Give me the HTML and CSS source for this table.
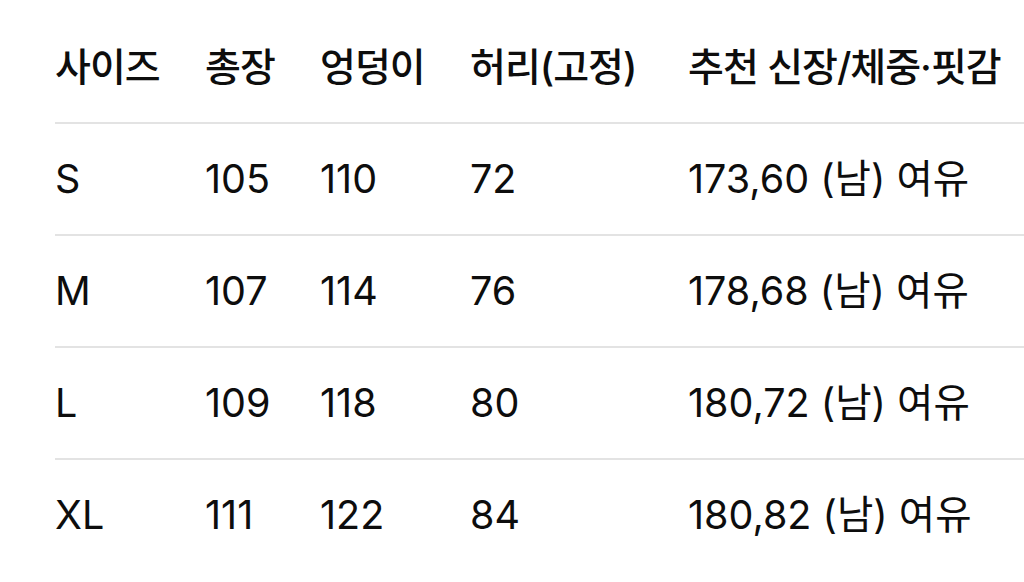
FILE: index.html
```html
<!DOCTYPE html>
<html lang="ko">
<head>
<meta charset="utf-8">
<link rel="stylesheet" href="styles.css">
</head>
<body>
<div class="table">
  <div class="row head">
    <div>사이즈</div><div>총장</div><div>엉덩이</div><div>허리(고정)</div><div>추천 신장/체중·핏감</div>
  </div>
  <div class="row">
    <div>S</div><div>105</div><div>110</div><div>72</div><div>173,60 (남) 여유</div>
  </div>
  <div class="row">
    <div>M</div><div>107</div><div>114</div><div>76</div><div>178,68 (남) 여유</div>
  </div>
  <div class="row">
    <div>L</div><div>109</div><div>118</div><div>80</div><div>180,72 (남) 여유</div>
  </div>
  <div class="row">
    <div>XL</div><div>111</div><div>122</div><div>84</div><div>180,82 (남) 여유</div>
  </div>
</div>
</body>
</html>
```
FILE: styles.css
```css
html, body {
  margin: 0;
  padding: 0;
  background: #ffffff;
}
body {
  font-family: "Inter", "Noto Sans CJK KR", sans-serif;
  color: #0d0d0d;
  font-size: 39.5px;
  line-height: 48px;
  overflow: hidden;
}
.table {
  padding-top: 12px;
  padding-left: 55px;
}
.row {
  display: grid;
  grid-template-columns: 150px 115px 150px 218px 1fr;
  align-items: center;
  height: 110px;
  border-bottom: 2px solid #e3e3e3;
  white-space: nowrap;
}
.row:last-child {
  border-bottom: none;
}
.head {
  font-size: 39px;
  font-weight: 500;
  letter-spacing: -1px;
}
```
